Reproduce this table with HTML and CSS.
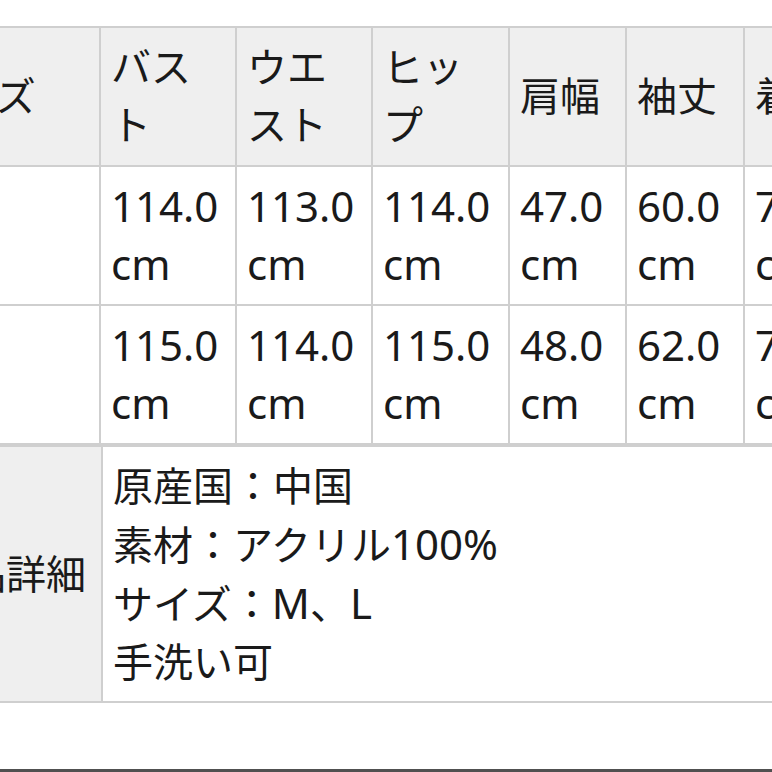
FILE: index.html
```html
<!DOCTYPE html>
<html lang="ja">
<head>
<meta charset="utf-8">
<title>サイズ表</title>
<link rel="stylesheet" href="styles.css">
</head>
<body>
<div class="page">
  <div class="size-table">
    <div class="cell head first"><span>サイズ</span></div>
    <div class="cell head"><span>バスト</span></div>
    <div class="cell head"><span>ウエスト</span></div>
    <div class="cell head"><span>ヒップ</span></div>
    <div class="cell head"><span>肩幅</span></div>
    <div class="cell head"><span>袖丈</span></div>
    <div class="cell head"><span>着丈</span></div>

    <div class="cell first"><span class="lat">M</span></div>
    <div class="cell"><span class="lat">114.0 cm</span></div>
    <div class="cell"><span class="lat">113.0 cm</span></div>
    <div class="cell"><span class="lat">114.0 cm</span></div>
    <div class="cell"><span class="lat">47.0 cm</span></div>
    <div class="cell"><span class="lat">60.0 cm</span></div>
    <div class="cell"><span class="lat">70.0 cm</span></div>

    <div class="cell first"><span class="lat">L</span></div>
    <div class="cell"><span class="lat">115.0 cm</span></div>
    <div class="cell"><span class="lat">114.0 cm</span></div>
    <div class="cell"><span class="lat">115.0 cm</span></div>
    <div class="cell"><span class="lat">48.0 cm</span></div>
    <div class="cell"><span class="lat">62.0 cm</span></div>
    <div class="cell"><span class="lat">72.0 cm</span></div>
  </div>

  <div class="detail-table">
    <div class="cell head first"><span>商品詳細</span></div>
    <div class="cell detail">
      <span>原産国：中国<br>素材：アクリル<span class="lat">100%</span><br>サイズ：<span class="lat">M</span>、<span class="lat">L</span><br>手洗い可</span>
    </div>
  </div>

  <div class="bottom-bar"></div>
</div>
</body>
</html>
```

FILE: styles.css
```css
* {
  box-sizing: border-box;
}

html, body {
  margin: 0;
  padding: 0;
  background: #ffffff;
}

body {
  font-family: "Noto Sans", "Noto Sans CJK JP", sans-serif;
  color: #1a1a1a;
  font-size: 40px;
  line-height: 58px;
}

.lat {
  font-size: 42px;
  line-height: 58px;
}

.page {
  width: 772px;
  height: 772px;
  overflow: hidden;
  display: flex;
  flex-direction: column;
}

.size-table {
  margin-top: 26px;
  margin-left: -95px;
  display: grid;
  grid-template-columns: 192px 134px 134px 135px 115px 116px 116px;
  gap: 2px;
  background: #cfcfcf;
  border: 2px solid #cfcfcf;
  width: max-content;
  flex-shrink: 0;
}

.detail-table {
  margin-left: -86px;
  display: grid;
  grid-template-columns: 185px 700px;
  gap: 2px;
  background: #cfcfcf;
  border: 2px solid #cfcfcf;
  width: max-content;
  flex-shrink: 0;
}

.cell {
  background: #ffffff;
  padding: 10px 10px 11px 10px;
  display: flex;
  align-items: center;
}

.detail-table .cell {
  padding: 10px;
}

.cell.head {
  background: #efefef;
}

.cell.first {
  white-space: nowrap;
}

.bottom-bar {
  margin-top: auto;
  height: 3px;
  background: #505050;
  flex-shrink: 0;
}
```
